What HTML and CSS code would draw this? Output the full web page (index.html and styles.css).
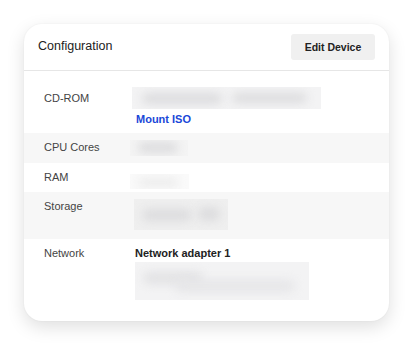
FILE: index.html
```html
<!DOCTYPE html>
<html lang="en">
<head>
    <meta charset="UTF-8">
    <meta name="viewport" content="width=device-width, initial-scale=1.0">
    <title>Configuration</title>
    <link rel="stylesheet" href="styles.css">
</head>
<body>
    <div class="card">
        <div class="card-header">
            <h2>Configuration</h2>
            <button type="button" class="button">Edit Device</button>
        </div>

        <div class="card-body">
            <div class="row">
                <div class="label label-tall">CD-ROM</div>
                <div class="value">
                    <div class="redacted redacted-cdrom"><span></span><span></span></div>
                    <a href="#" class="link">Mount ISO</a>
                </div>
            </div>

            <div class="row alt">
                <div class="label">CPU Cores</div>
                <div class="value">
                    <div class="redacted redacted-cpu"><span></span></div>
                </div>
            </div>

            <div class="row">
                <div class="label">RAM</div>
                <div class="value">
                    <div class="redacted redacted-ram"><span></span></div>
                </div>
            </div>

            <div class="row alt row-storage">
                <div class="label">Storage</div>
                <div class="value">
                    <div class="redacted redacted-storage"><span></span><span></span></div>
                </div>
            </div>

            <div class="row">
                <div class="label">Network</div>
                <div class="value">
                    <div class="value-title">Network adapter 1</div>
                    <div class="redacted redacted-net"><span></span><span></span></div>
                </div>
            </div>
        </div>
    </div>
</body>
</html>
```

FILE: styles.css
```css
* {
    margin: 0;
    padding: 0;
    box-sizing: border-box;
}

body {
    font-family: "Liberation Sans", Arial, sans-serif;
    background: #ffffff;
    padding: 24px;
    color: #222;
}

.card {
    width: 365px;
    height: 297px;
    background: white;
    border-radius: 18px;
    box-shadow: 0 6px 18px rgba(0,0,0,0.13), 0 0 2px rgba(0,0,0,0.06);
    overflow: hidden;
}

.card-header {
    height: 47px;
    display: flex;
    align-items: center;
    justify-content: space-between;
    padding: 0 14px;
    border-bottom: 1px solid #e6e6e6;
}

.card-header h2 {
    font-size: 12.5px;
    font-weight: normal;
    color: #222;
    margin-top: -2px;
}

.button {
    background: #f0f0f0;
    color: #222;
    border: none;
    width: 84px;
    height: 26px;
    border-radius: 3px;
    font-family: inherit;
    font-size: 10.5px;
    font-weight: 600;
    cursor: pointer;
}

.card-body {
    padding-top: 9px;
}

.row {
    display: flex;
    padding: 7px 20px;
}

.row.alt {
    background: #f7f7f7;
}

.row-storage {
    padding-bottom: 9px;
}

.label {
    width: 88px;
    flex-shrink: 0;
    font-size: 11px;
    line-height: 14px;
    color: #444;
}

.label-tall {
    padding-top: 4px;
}

.value {
    flex: 1;
    font-size: 11px;
    line-height: 14px;
}

.value-title {
    font-weight: bold;
    color: #222;
    margin: 0 0 2px 3px;
}

.link {
    display: block;
    color: #1a47d8;
    text-decoration: none;
    font-weight: 600;
    margin: 3px 0 0 4px;
}

/* blurred placeholders for hidden values */
.redacted {
    position: relative;
    background: #f3f3f4;
    overflow: hidden;
}

.redacted span {
    position: absolute;
    background: #dcdcde;
    border-radius: 6px;
    filter: blur(5px);
}

.redacted-cdrom {
    width: 189px;
    height: 22px;
}

.redacted-cdrom span:nth-child(1) { left: 10px; top: 6px; width: 80px; height: 11px; }
.redacted-cdrom span:nth-child(2) { left: 100px; top: 6px; width: 75px; height: 10px; }

.redacted-cpu {
    width: 58px;
    height: 16px;
    margin-left: -2px;
    background: #f4f4f4;
}

.redacted-cpu span { left: 8px; top: 2px; width: 40px; height: 11px; }

.redacted-ram {
    width: 59px;
    height: 15px;
    margin-left: -2px;
    margin-top: 4px;
    margin-bottom: -4px;
    background: #fafafa;
}

.redacted-ram span { left: 8px; top: 4px; width: 40px; height: 9px; background: #ececec; }

.redacted-storage {
    width: 94px;
    height: 31px;
    margin-left: 2px;
    background: #efefef;
}

.redacted-storage span:nth-child(1) { left: 8px; top: 10px; width: 50px; height: 12px; }
.redacted-storage span:nth-child(2) { left: 64px; top: 8px; width: 22px; height: 14px; }

.redacted-net {
    width: 174px;
    height: 38px;
    margin: 1px 0 0 3px;
}

.redacted-net span:nth-child(1) { left: 8px; top: 10px; width: 60px; height: 12px; background: #e2e2e4; }
.redacted-net span:nth-child(2) { left: 40px; top: 18px; width: 120px; height: 12px; background: #e6e6e8; }
```
